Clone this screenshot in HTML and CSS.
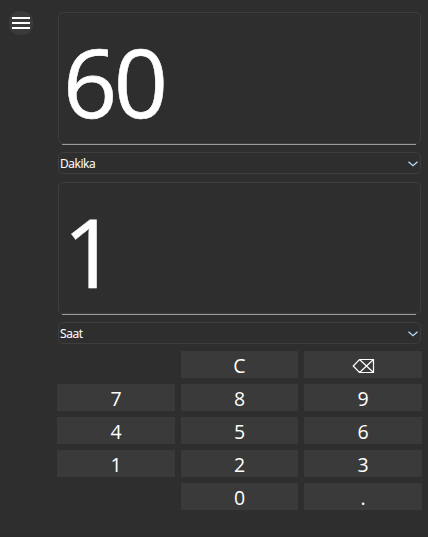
FILE: index.html
```html
<!DOCTYPE html>
<html lang="tr">
<head>
<meta charset="utf-8">
<title>Zaman</title>
<link rel="stylesheet" href="styles.css">
</head>
<body>
<div class="app">
  <aside class="rail">
    <button class="menu" aria-label="Menü"><span></span><span></span><span></span></button>
  </aside>
  <main class="converter">
    <div class="display"><span class="value">60</span></div>
    <div class="unit"><span class="unit-name">Dakika</span>
      <svg class="chevron" viewBox="0 0 10 6"><path d="M.5 .7 5 4.8 9.500 .7"/></svg></div>
    <div class="display"><span class="value">1</span></div>
    <div class="unit"><span class="unit-name">Saat</span>
      <svg class="chevron" viewBox="0 0 10 6"><path d="M.5 .7 5 4.8 9.500 .7"/></svg></div>
    <div class="keypad">
      <button class="key clear">C</button>
      <button class="key" aria-label="Sil"><svg class="erase" viewBox="0 0 23 15"><path d="M7.500 1.500H21.500V14.500H7.500L1.200 8ZM7.500 1.500 21.500 14.500M21.500 1.500 7.500 14.500"/></svg></button>
      <button class="key">7</button><button class="key">8</button><button class="key">9</button>
      <button class="key">4</button><button class="key">5</button><button class="key">6</button>
      <button class="key">1</button><button class="key">2</button><button class="key">3</button>
      <button class="key zero">0</button><button class="key">.</button>
    </div>
  </main>
</div>
</body>
</html>
```
FILE: styles.css
```css
* { box-sizing: border-box; }
body {
  margin: 0;
  background: #2e2e2e;
  color: #fff;
  font-family: "Open Sans", "Noto Sans", sans-serif;
}
button { border: 0; padding: 0; color: inherit; font-family: inherit; }
.app { display: flex; height: 537px; overflow: hidden; border-bottom: 4px solid #2b2b2b; }
.rail { width: 57px; padding: 11px 0 0 9px; }
.menu {
  display: flex;
  flex-direction: column;
  align-items: center;
  justify-content: center;
  gap: 3px;
  width: 24px;
  height: 24px;
  border-radius: 10px;
  background: #3a3a3a;
}
.menu span { width: 18px; height: 2px; background: #fff; }
.converter { width: 365px; padding-top: 12px; }
.display {
  position: relative;
  height: 132px;
  margin: 0 1px 8px;
  padding-left: 4px;
  border: 1px solid #3d3d3d;
  border-radius: 5px;
}
.display::after {
  content: "";
  position: absolute;
  left: 3px;
  right: 4px;
  bottom: -2px;
  height: 1px;
  background: #9a9a9a;
}
.value {
  display: block;
  font-size: 95px;
  line-height: 137px;
  letter-spacing: -3.5px;
  -webkit-text-stroke: .6px #fff;
}
.unit {
  display: flex;
  align-items: center;
  justify-content: space-between;
  height: 22px;
  margin: 0 1px 8px;
  padding: 0 2px 0 1px;
  border: 1px solid #3d3d3d;
  border-radius: 5px;
  font-size: 12px;
}
.unit-name { letter-spacing: -.4px; -webkit-text-stroke: .1px #fff; }
.chevron { width: 10px; height: 6px; margin-top: 2px; }
.chevron path { fill: none; stroke: #b9e0ff; stroke-width: 1.2; }
.keypad {
  display: grid;
  grid-template-columns: 118px 117px 118px;
  grid-auto-rows: 27px;
  gap: 6px;
  margin-top: -1px;
}
.key {
  height: 27px;
  background: #3a3a3a;
  font-size: 19.5px;
  font-stretch: 92%;
  line-height: 29px;
}
.clear, .zero { grid-column: 2; }
.erase { display: block; width: 23px; height: 15px; margin: 2px auto 0; }
.erase path { fill: none; stroke: #fff; stroke-width: 1.2; }
```
